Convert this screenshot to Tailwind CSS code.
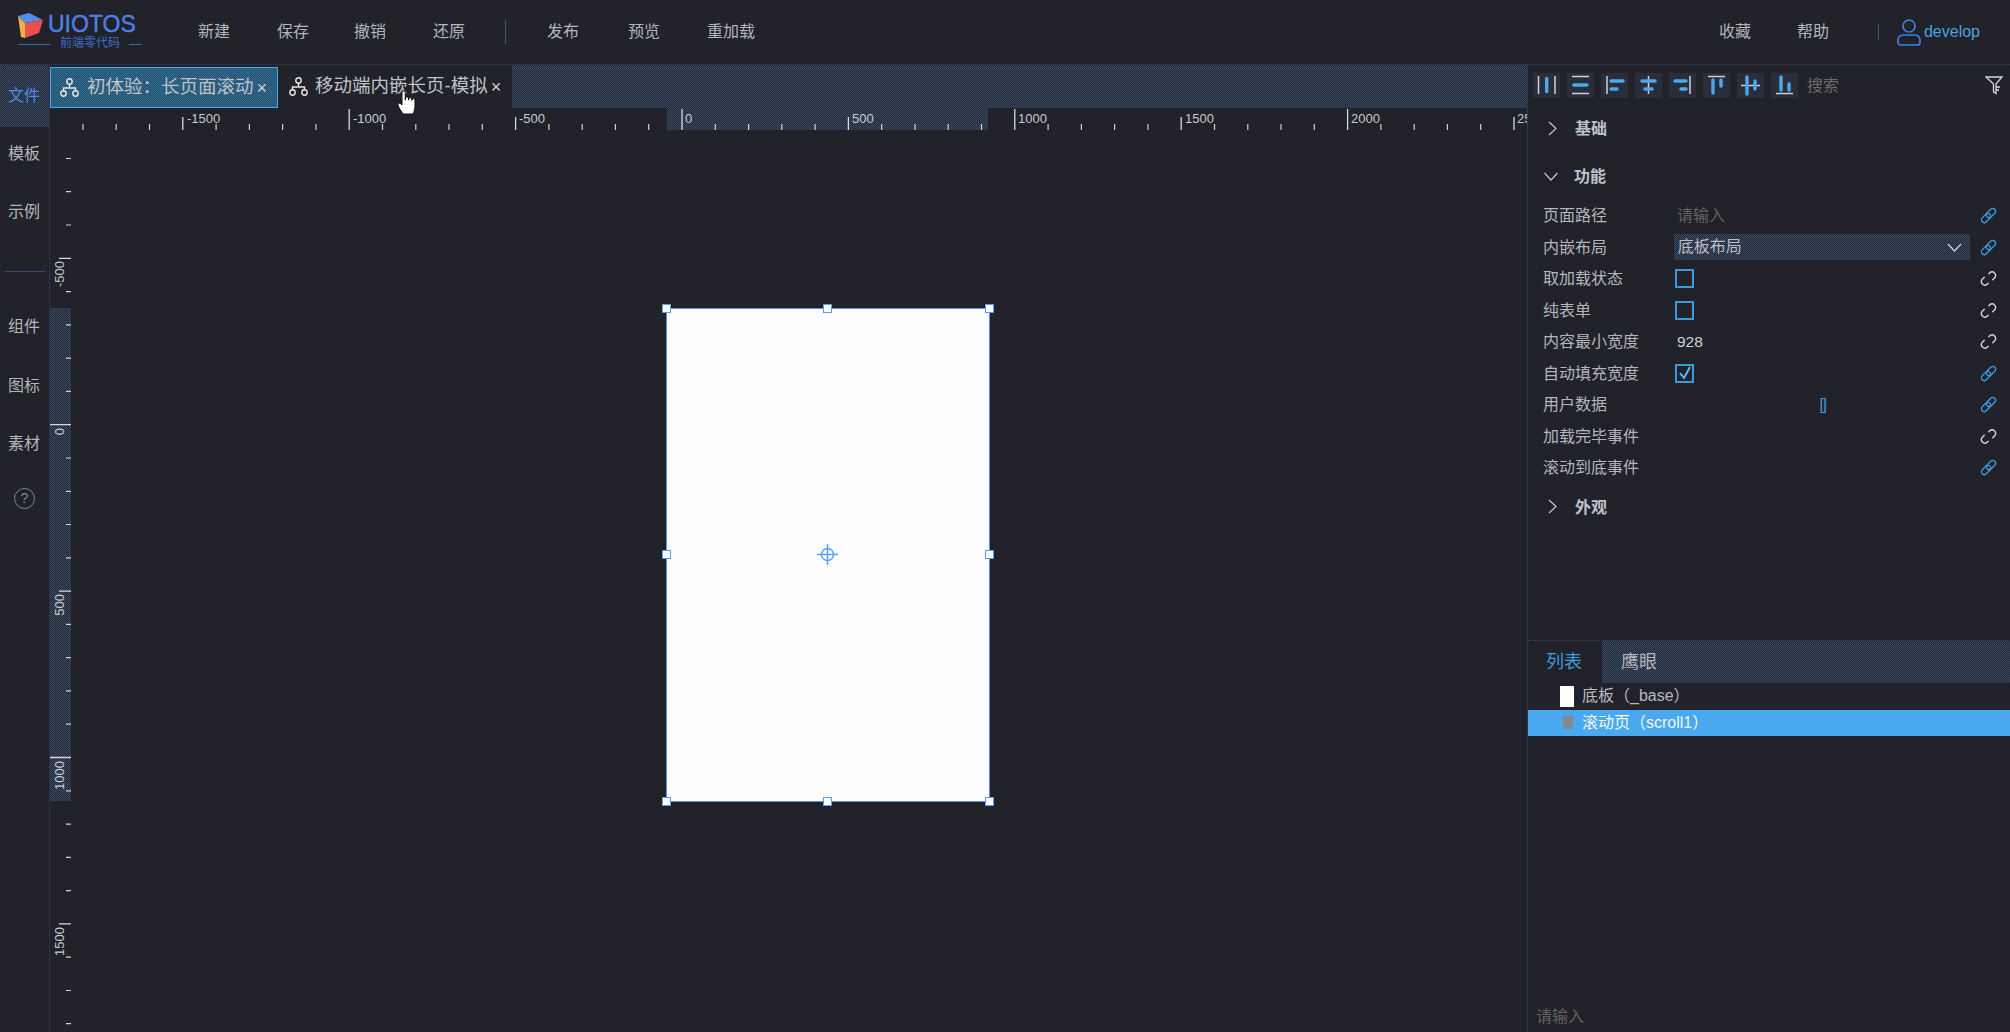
<!DOCTYPE html>
<html lang="zh-CN">
<head>
<meta charset="utf-8">
<title>UIOTOS</title>
<script src="https://cdn.jsdelivr.net/npm/@tailwindcss/browser@4"></script>
</head>
<body class="w-[2010px] h-[1032px] overflow-hidden bg-[#212229] bg-[image:repeating-conic-gradient(#26272c_0_25%,#1c1d26_0_50%)] bg-[length:2px_2px] text-[#b4b6bc] text-[16px] leading-none font-['Liberation_Sans','Noto_Sans_CJK_SC',sans-serif]">
<div class="flex flex-col h-[1032px]">

  <!-- header -->
  <header class="flex items-center h-[65px] border-b border-dotted border-[#3a4558] shrink-0">
    <div class="relative w-[198px] h-[65px] shrink-0">
      <svg class="absolute left-[17px] top-[12px]" width="27" height="27" viewBox="0 0 27 27">
        <polygon points="1,4 12,1 26,8 8,11" fill="#4f8ef0"/>
        <polygon points="1,4 8,11 8,26 4,25" fill="#f2b145"/>
        <polygon points="8,11 26,8 22,21 8,26" fill="#e8504e"/>
      </svg>
      <span class="absolute left-[48px] top-[13px] text-[23px] leading-[23px] text-[#4f80e4] [-webkit-text-stroke:0.4px_#4f80e4]">UIOTOS</span>
      <span class="absolute left-[18px] top-[44px] w-[32px] h-px bg-[#3a68b8]"></span>
      <span class="absolute left-[60px] top-[37px] text-[12px] leading-[12px] text-[#3f70c8]">前端零代码</span>
      <span class="absolute left-[129px] top-[44px] w-[13px] h-px bg-[#3a68b8]"></span>
    </div>
    <nav class="flex items-center">
      <a class="w-[79px]">新建</a>
      <a class="w-[77px]">保存</a>
      <a class="w-[79px]">撤销</a>
      <a class="w-[72px]">还原</a>
      <span class="w-px h-[24px] bg-[#3a5678] mr-[41px]"></span>
      <a class="w-[81px]">发布</a>
      <a class="w-[79px]">预览</a>
      <a>重加载</a>
    </nav>
    <div class="flex items-center ml-auto">
      <a class="w-[78px]">收藏</a>
      <a class="w-[81px]">帮助</a>
      <span class="w-px h-[16px] bg-[#3a5678] mr-[18px]"></span>
      <svg class="mr-[3px]" width="24" height="28" viewBox="0 0 24 28" fill="none" stroke="#3f7fe8" stroke-width="1.7">
        <circle cx="12" cy="8" r="6"/>
        <path d="M6 17h12a5 5 0 0 1 5 5v2.5a2.5 2.5 0 0 1-2.5 2.5h-17A2.5 2.5 0 0 1 1 24.5V22a5 5 0 0 1 5-5z"/>
      </svg>
      <span class="text-[#4aa3df] mr-[30px]">develop</span>
    </div>
  </header>

  <div class="flex flex-1 min-h-0">
    <!-- left sidebar -->
    <aside class="w-[50px] shrink-0 flex flex-col items-center border-r border-dotted border-[#343c4e]">
      <div class="w-full h-[62px] bg-[image:repeating-conic-gradient(#394860_0_25%,#232a38_0_50%)] bg-[length:2px_2px] flex items-center justify-center text-[#4f8ae8] pr-[1px]">文件</div>
      <div class="h-[54px] pr-[1px] flex items-center">模板</div>
      <div class="h-[62px] pr-[1px] flex items-center">示例</div>
      <div class="h-[56px] flex items-center"><span class="block w-[40px] h-px bg-[#3a4a6a]"></span></div>
      <div class="h-[56px] pr-[1px] flex items-center">组件</div>
      <div class="h-[62px] pr-[1px] flex items-center">图标</div>
      <div class="h-[54px] pr-[1px] flex items-center">素材</div>
      <div class="h-[54px] flex items-center">
        <span class="w-[21px] h-[21px] rounded-full border border-[#7f8a8a] text-[#7f8a8a] text-[14px] flex items-center justify-center">?</span>
      </div>
    </aside>

    <!-- centre -->
    <section class="w-[1477px] shrink-0 flex flex-col min-w-0">
      <div class="flex h-[43px] shrink-0">
        <div class="w-[228px] h-[41px] mt-[2px] bg-[image:repeating-conic-gradient(#2f6c90_0_25%,#265270_0_50%)] bg-[length:2px_2px] border-[1.5px] border-[#4aa9ee] flex items-center pl-[9px]">
          <svg class="mr-[8px]" width="19" height="19" viewBox="0 0 19 19" fill="none" stroke="#e8e8e8" stroke-width="1.4">
            <circle cx="9.5" cy="3.5" r="2.7"/><circle cx="3.5" cy="15.5" r="2.7"/><circle cx="15.5" cy="15.5" r="2.7"/>
            <path d="M9.5 6.2V10M3.5 12.8V10H15.5V12.8"/>
          </svg>
          <span class="text-[18.5px] text-[#bfc3c9] whitespace-nowrap">初体验：长页面滚动</span>
          <span class="ml-[3px] text-[#cfd2d6] text-[18px]">×</span>
        </div>
        <div class="w-[234px] flex items-center pl-[11px]">
          <svg class="mr-[7px]" width="19" height="19" viewBox="0 0 19 19" fill="none" stroke="#e8e8e8" stroke-width="1.4">
            <circle cx="9.5" cy="3.5" r="2.7"/><circle cx="3.5" cy="15.5" r="2.7"/><circle cx="15.5" cy="15.5" r="2.7"/>
            <path d="M9.5 6.2V10M3.5 12.8V10H15.5V12.8"/>
          </svg>
          <span class="text-[18.5px] text-[#bfc3c9] whitespace-nowrap">移动端内嵌长页-模拟</span>
          <span class="ml-[3px] text-[#cfd2d6] text-[18px]">×</span>
        </div>
        <div class="flex-1 bg-[image:repeating-conic-gradient(#394860_0_25%,#232a38_0_50%)] bg-[length:2px_2px]"></div>
      </div>

      <!-- horizontal ruler -->
      <div class="relative h-[22px] shrink-0">
        <div class="absolute left-[617px] top-0 w-[321px] h-[22px] bg-[image:repeating-conic-gradient(#394860_0_25%,#232a38_0_50%)] bg-[length:2px_2px]"></div>
        <svg class="absolute left-0 top-0" width="1477" height="22" viewBox="0 0 1477 22" fill="#c8cacd" font-size="13" font-family="Liberation Sans, sans-serif">
          <path stroke="#d2d2d2" stroke-width="1.2" d="M33 16V22M66.2 16V22M99.5 16V22M166.1 16V22M199.4 16V22M232.6 16V22M265.9 16V22M332.5 16V22M365.8 16V22M399 16V22M432.3 16V22M498.9 16V22M532.2 16V22M565.4 16V22M598.7 16V22M665.3 16V22M698.6 16V22M731.8 16V22M765.1 16V22M831.7 16V22M865 16V22M898.2 16V22M931.5 16V22M998.1 16V22M1031.4 16V22M1064.6 16V22M1097.9 16V22M1164.5 16V22M1197.8 16V22M1231 16V22M1264.3 16V22M1330.9 16V22M1364.2 16V22M1397.4 16V22M1430.7 16V22"/>
          <path stroke="#d8d8d8" stroke-width="1.3" d="M132.8 9V22M465.6 9V22M798.4 9V22M1131.2 9V22M1464 9V22M299.2 1V22M632 1V22M964.8 1V22M1297.6 1V22"/>
          <text x="137" y="15">-1500</text><text x="303" y="15">-1000</text><text x="469" y="15">-500</text><text x="635" y="15">0</text><text x="802" y="15">500</text><text x="968" y="15">1000</text><text x="1135" y="15">1500</text><text x="1301" y="15">2000</text><text x="1467" y="15">25</text>
        </svg>
      </div>

      <!-- canvas -->
      <div class="relative flex flex-1 min-h-0">
        <div class="relative w-[21px] shrink-0">
          <div class="absolute left-0 top-[178px] w-[21px] h-[493px] bg-[image:repeating-conic-gradient(#394860_0_25%,#232a38_0_50%)] bg-[length:2px_2px]"></div>
          <svg class="absolute left-0 top-0" width="21" height="902" viewBox="0 0 21 902" fill="#c8cacd" font-size="13" font-family="Liberation Sans, sans-serif">
            <path stroke="#d2d2d2" stroke-width="1.2" d="M16 28.5H21M16 61.7H21M16 95H21M16 161.6H21M16 194.9H21M16 228.1H21M16 261.4H21M16 328H21M16 361.3H21M16 394.5H21M16 427.8H21M16 494.4H21M16 527.7H21M16 560.9H21M16 594.2H21M16 660.8H21M16 694.1H21M16 727.3H21M16 760.6H21M16 827.2H21M16 860.5H21M16 893.7H21"/>
            <path stroke="#d8d8d8" stroke-width="1.3" d="M9 128.3H21M9 461.1H21M9 793.9H21M0 294.7H21M0 627.5H21"/>
            <text transform="translate(14 131) rotate(-90)" text-anchor="end">-500</text>
            <text transform="translate(14 298) rotate(-90)" text-anchor="end">0</text>
            <text transform="translate(14 464) rotate(-90)" text-anchor="end">500</text>
            <text transform="translate(14 631) rotate(-90)" text-anchor="end">1000</text>
            <text transform="translate(14 797) rotate(-90)" text-anchor="end">1500</text>
          </svg>
        </div>
        <div class="relative flex-1">
          <!-- page on the free canvas -->
          <div class="absolute left-[595px] top-[178px] w-[324px] h-[494px] bg-[#fdfdff] border-[1.5px] border-[#5a90e8]">
            <span class="absolute -left-[5px] -top-[5px] w-[9px] h-[9px] bg-white border-[1.5px] border-[#5a9cf0]"></span>
            <span class="absolute left-[156px] -top-[5px] w-[9px] h-[9px] bg-white border-[1.5px] border-[#5a9cf0]"></span>
            <span class="absolute -right-[5px] -top-[5px] w-[9px] h-[9px] bg-white border-[1.5px] border-[#5a9cf0]"></span>
            <span class="absolute -left-[5px] top-[241px] w-[9px] h-[9px] bg-white border-[1.5px] border-[#5a9cf0]"></span>
            <span class="absolute -right-[5px] top-[241px] w-[9px] h-[9px] bg-white border-[1.5px] border-[#5a9cf0]"></span>
            <span class="absolute -left-[5px] -bottom-[5px] w-[9px] h-[9px] bg-white border-[1.5px] border-[#5a9cf0]"></span>
            <span class="absolute left-[156px] -bottom-[5px] w-[9px] h-[9px] bg-white border-[1.5px] border-[#5a9cf0]"></span>
            <span class="absolute -right-[5px] -bottom-[5px] w-[9px] h-[9px] bg-white border-[1.5px] border-[#5a9cf0]"></span>
            <svg class="absolute left-[150px] top-[235px]" width="21" height="21" viewBox="0 0 21 21" fill="none" stroke="#5aa0f8" stroke-width="1.5">
              <circle cx="10.5" cy="10.5" r="6"/><path d="M10.5 0V21M0 10.5H21"/>
            </svg>
          </div>
        </div>
      </div>
    </section>

    <!-- right panel -->
    <aside class="flex-1 min-w-0 flex flex-col border-l border-dotted border-[#3a4766]">
      <div class="flex-1 min-h-0">
        <div class="flex items-start h-[41px] pl-[5px] pt-[8px] gap-[7px]">
          <span class="w-[27px] h-[25px] bg-[#2a2e3a] shrink-0"><svg width="27" height="25" viewBox="0 0 27 25" fill="none" stroke="#cfd0d2" stroke-width="1.5"><path d="M5.5 3V21M22 3V21"/><path d="M13.7 5.5V18.5" stroke="#4aa9ee" stroke-width="3.4" stroke-linecap="round"/></svg></span>
          <span class="w-[27px] h-[25px] bg-[#2a2e3a] shrink-0"><svg width="27" height="25" viewBox="0 0 27 25" fill="none" stroke="#cfd0d2" stroke-width="1.5"><path d="M5 3.5H22M5 20.5H22"/><path d="M7 12H20" stroke="#4aa9ee" stroke-width="3.4" stroke-linecap="round"/></svg></span>
          <span class="w-[27px] h-[25px] bg-[#2a2e3a] shrink-0"><svg width="27" height="25" viewBox="0 0 27 25" fill="none" stroke="#cfd0d2" stroke-width="1.5"><path d="M6 3V21"/><path d="M10 8H22M10 16H16" stroke="#4aa9ee" stroke-width="3.4" stroke-linecap="round"/></svg></span>
          <span class="w-[27px] h-[25px] bg-[#2a2e3a] shrink-0"><svg width="27" height="25" viewBox="0 0 27 25" fill="none" stroke="#cfd0d2" stroke-width="1.5"><path d="M13.5 3V21"/><path d="M7 8H20M10 16H17" stroke="#4aa9ee" stroke-width="3.4" stroke-linecap="round"/></svg></span>
          <span class="w-[27px] h-[25px] bg-[#2a2e3a] shrink-0"><svg width="27" height="25" viewBox="0 0 27 25" fill="none" stroke="#cfd0d2" stroke-width="1.5"><path d="M21 3V21"/><path d="M6 8H17M12 16H17" stroke="#4aa9ee" stroke-width="3.4" stroke-linecap="round"/></svg></span>
          <span class="w-[27px] h-[25px] bg-[#2a2e3a] shrink-0"><svg width="27" height="25" viewBox="0 0 27 25" fill="none" stroke="#cfd0d2" stroke-width="1.5"><path d="M5 3.5H22"/><path d="M10 7V20M18 7V13" stroke="#4aa9ee" stroke-width="3.4" stroke-linecap="round"/></svg></span>
          <span class="w-[27px] h-[25px] bg-[#2a2e3a] shrink-0"><svg width="27" height="25" viewBox="0 0 27 25" fill="none" stroke="#cfd0d2" stroke-width="1.5"><path d="M4 12.5H23"/><path d="M10 4V21M18 8V16" stroke="#4aa9ee" stroke-width="3.4" stroke-linecap="round"/></svg></span>
          <span class="w-[27px] h-[25px] bg-[#2a2e3a] shrink-0"><svg width="27" height="25" viewBox="0 0 27 25" fill="none" stroke="#cfd0d2" stroke-width="1.5"><path d="M5 20.5H22"/><path d="M10 4V17M18 11V17" stroke="#4aa9ee" stroke-width="3.4" stroke-linecap="round"/></svg></span>
          <span class="ml-[2px] self-center -mt-[7px] text-[#6a6a68] whitespace-nowrap">搜索</span>
          <svg class="ml-auto mr-[7px] mt-[3px] shrink-0" width="18" height="19" viewBox="0 0 18 19" fill="none" stroke="#d4d6d8" stroke-width="1.3">
            <path d="M1 1H17L11 8V17.5L8.5 16V8L1 1Z"/><path d="M11 11H15M11 14H14"/>
          </svg>
        </div>

        <div class="flex items-center h-[44px]">
          <svg class="ml-[20px] mr-[18px]" width="9" height="15" viewBox="0 0 9 15" fill="none" stroke="#c8c8c8" stroke-width="1.2"><path d="M1 1L8 7.5L1 14"/></svg>
          <span class="font-bold text-[#bcc2cc] pt-[2px]">基础</span>
        </div>
        <div class="flex items-center h-[44px] mt-[4px]">
          <svg class="ml-[16px] mr-[16px]" width="14" height="9" viewBox="0 0 14 9" fill="none" stroke="#c8c8c8" stroke-width="1.2"><path d="M0.5 1L7 8L13.5 1"/></svg>
          <span class="font-bold text-[#bcc2cc] pt-[2px]">功能</span>
        </div>

        <div class="mt-[2px] pl-[15px] pr-[13px]">
          <div class="flex items-center h-[31.5px]">
            <span class="w-[134px] pt-[1px]">页面路径</span><span class="text-[#62625f] flex-1 pt-[1px]">请输入</span>
            <svg width="17" height="17" viewBox="0 0 24 24" fill="none" stroke="#3d9be0" stroke-width="1.9"><rect x="11.5" y="1" width="8" height="15" rx="4" transform="rotate(45 15.5 8.5)"/><rect x="4.5" y="8" width="8" height="15" rx="4" transform="rotate(45 8.5 15.5)"/></svg>
          </div>
          <div class="flex items-center h-[31.5px]">
            <span class="w-[131px] pt-[1px]">内嵌布局</span>
            <div class="w-[297px] h-[26px] bg-[image:repeating-conic-gradient(#394860_0_25%,#232a38_0_50%)] bg-[length:2px_2px] flex items-center pl-[4px] pr-[8px] mr-[10px]">
              <span class="flex-1 text-[#bcbec4]">底板布局</span>
              <svg width="15" height="9" viewBox="0 0 15 9" fill="none" stroke="#d0d0d0" stroke-width="1.3"><path d="M1 1L7.5 8L14 1"/></svg>
            </div>
            <svg width="17" height="17" viewBox="0 0 24 24" fill="none" stroke="#3d9be0" stroke-width="1.9"><rect x="11.5" y="1" width="8" height="15" rx="4" transform="rotate(45 15.5 8.5)"/><rect x="4.5" y="8" width="8" height="15" rx="4" transform="rotate(45 8.5 15.5)"/></svg>
          </div>
          <div class="flex items-center h-[31.5px]">
            <span class="w-[132px] pt-[1px]">取加载状态</span><span class="w-[19px] h-[19px] border-2 border-[#3b9ad9]"></span><span class="flex-1"></span>
            <svg width="17" height="17" viewBox="0 0 24 24" fill="none" stroke="#d4d4d4" stroke-width="2" stroke-linecap="round"><path d="M12.5 5.2L14 3.7a5 5 0 0 1 7 7l-3 3"/><path d="M11.5 18.8L10 20.3a5 5 0 0 1-7-7l3-3"/></svg>
          </div>
          <div class="flex items-center h-[31.5px]">
            <span class="w-[132px] pt-[1px]">纯表单</span><span class="w-[19px] h-[19px] border-2 border-[#3b9ad9]"></span><span class="flex-1"></span>
            <svg width="17" height="17" viewBox="0 0 24 24" fill="none" stroke="#d4d4d4" stroke-width="2" stroke-linecap="round"><path d="M12.5 5.2L14 3.7a5 5 0 0 1 7 7l-3 3"/><path d="M11.5 18.8L10 20.3a5 5 0 0 1-7-7l3-3"/></svg>
          </div>
          <div class="flex items-center h-[31.5px]">
            <span class="w-[134px] pt-[1px]">内容最小宽度</span><span class="flex-1 text-[#d2d2d2] text-[15.5px]">928</span>
            <svg width="17" height="17" viewBox="0 0 24 24" fill="none" stroke="#d4d4d4" stroke-width="2" stroke-linecap="round"><path d="M12.5 5.2L14 3.7a5 5 0 0 1 7 7l-3 3"/><path d="M11.5 18.8L10 20.3a5 5 0 0 1-7-7l3-3"/></svg>
          </div>
          <div class="flex items-center h-[31.5px]">
            <span class="w-[132px] pt-[1px]">自动填充宽度</span>
            <span class="w-[19px] h-[19px] border-2 border-[#3b9ad9] flex items-center justify-center">
              <svg width="14" height="14" viewBox="0 0 14 14" fill="none" stroke="#62b6f0" stroke-width="2"><path d="M2 7L6 12L12 1"/></svg>
            </span><span class="flex-1"></span>
            <svg width="17" height="17" viewBox="0 0 24 24" fill="none" stroke="#3d9be0" stroke-width="1.9"><rect x="11.5" y="1" width="8" height="15" rx="4" transform="rotate(45 15.5 8.5)"/><rect x="4.5" y="8" width="8" height="15" rx="4" transform="rotate(45 8.5 15.5)"/></svg>
          </div>
          <div class="flex items-center h-[31.5px]">
            <span class="w-[134px] pt-[1px]">用户数据</span><span class="flex-1 text-center text-[16px] text-[#3d9be0] tracking-[-1.5px] pr-[12px]">[]</span>
            <svg width="17" height="17" viewBox="0 0 24 24" fill="none" stroke="#3d9be0" stroke-width="1.9"><rect x="11.5" y="1" width="8" height="15" rx="4" transform="rotate(45 15.5 8.5)"/><rect x="4.5" y="8" width="8" height="15" rx="4" transform="rotate(45 8.5 15.5)"/></svg>
          </div>
          <div class="flex items-center h-[31.5px]">
            <span class="flex-1 pt-[1px]">加载完毕事件</span>
            <svg width="17" height="17" viewBox="0 0 24 24" fill="none" stroke="#d4d4d4" stroke-width="2" stroke-linecap="round"><path d="M12.5 5.2L14 3.7a5 5 0 0 1 7 7l-3 3"/><path d="M11.5 18.8L10 20.3a5 5 0 0 1-7-7l3-3"/></svg>
          </div>
          <div class="flex items-center h-[31.5px]">
            <span class="flex-1 pt-[1px]">滚动到底事件</span>
            <svg width="17" height="17" viewBox="0 0 24 24" fill="none" stroke="#3d9be0" stroke-width="1.9"><rect x="11.5" y="1" width="8" height="15" rx="4" transform="rotate(45 15.5 8.5)"/><rect x="4.5" y="8" width="8" height="15" rx="4" transform="rotate(45 8.5 15.5)"/></svg>
          </div>
        </div>

        <div class="flex items-center h-[46px]">
          <svg class="ml-[20px] mr-[18px]" width="9" height="15" viewBox="0 0 9 15" fill="none" stroke="#c8c8c8" stroke-width="1.2"><path d="M1 1L8 7.5L1 14"/></svg>
          <span class="font-bold text-[#bcc2cc] pt-[2px]">外观</span>
        </div>
      </div>

      <div class="h-[392px] shrink-0 flex flex-col border-t border-dotted border-[#3a4766]">
        <div class="flex h-[42px] shrink-0">
          <div class="w-[74px] flex items-center justify-center text-[18px] text-[#3f9bdc] pr-[2px]">列表</div>
          <div class="flex-1 bg-[image:repeating-conic-gradient(#394860_0_25%,#232a38_0_50%)] bg-[length:2px_2px] flex items-center pl-[19px] text-[18px] text-[#b4b6bc]">鹰眼</div>
        </div>
        <div class="flex items-center h-[26.5px] pl-[32px]">
          <span class="w-[14px] h-[21px] bg-white mr-[8px]"></span>
          <span class="text-[#b8bac0]">底板（_base）</span>
        </div>
        <div class="flex items-center h-[26.5px] pl-[35px] bg-[#4aa9ee]">
          <span class="w-[10px] h-[13px] bg-[#7c8a94] mr-[9px]"></span>
          <span class="text-[#f0f6fb]">滚动页（scroll1）</span>
        </div>
        <div class="mt-auto pl-[8px] pb-[7px] text-[#62625f]">请输入</div>
      </div>
    </aside>
  </div>
</div>

<!-- mouse cursor over the tab -->
<svg class="fixed left-[397px] top-[90px]" width="19" height="25" viewBox="0 0 19 25" fill="#fff" stroke="#111" stroke-width="1">
  <path d="M5 2.5a1.6 1.6 0 0 1 3.2 0V10h.3V8.3a1.5 1.5 0 0 1 3 0V10h.3V9a1.5 1.5 0 0 1 3 0v1.3h.2v-.3a1.5 1.5 0 0 1 3 0v6c0 4-2 8-2 8H6c-1-2-5-7-5-9.5 0-1.5 1.5-2 3-.5l1 1z"/>
</svg>
</body>
</html>
